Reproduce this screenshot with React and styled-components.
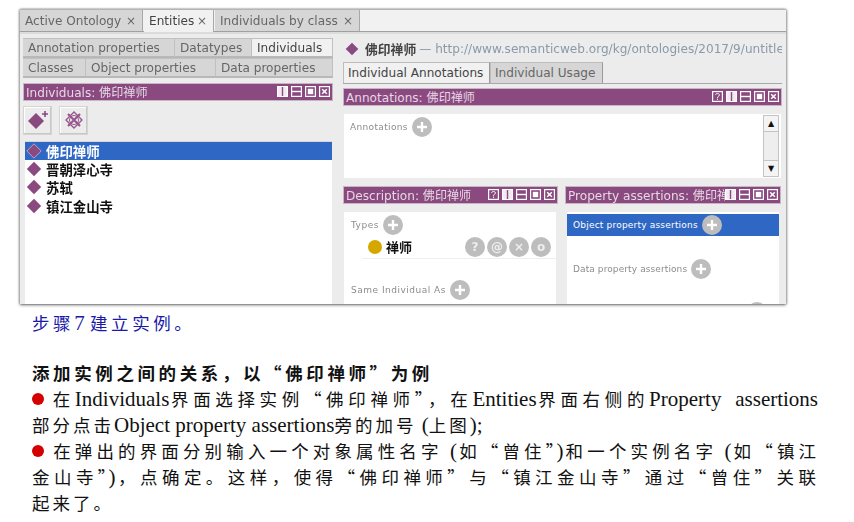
import React from 'react'
import styled, { createGlobalStyle } from 'styled-components'

const purple = '#8a4a80'
const blue = '#2f68c4'

const GlobalStyle = createGlobalStyle`
  html, body { margin: 0; padding: 0; background: #fff; }
  body { width: 854px; height: 522px; overflow: hidden; font-family: "DejaVu Sans", "Noto Sans CJK SC", sans-serif; }
`

const Page = styled.div`
  padding: 9px 0 0 20px;
`

const Window = styled.div`
  width: 766px;
  height: 295px;
  background: #ececec;
  overflow: hidden;
  border-top: 1px solid #b5b5b5;
  box-shadow: 0 1px 3px rgba(0,0,0,.55), 1px 0 2px rgba(0,0,0,.2), -1px 0 2px rgba(0,0,0,.2);
  filter: blur(.35px);
  box-sizing: border-box;
`

const TabBar = styled.div`
  display: flex;
  height: 21px;
  background: #f1f1f1;
  border-bottom: 1px solid #a0a0a0;
  box-shadow: 0 2px 0 #dcdcdc;
`

const MainTab = styled.div`
  width: ${p => p.$w}px;
  margin-right: 1px;
  padding: 0 6px 0 5px;
  box-sizing: border-box;
  display: flex;
  align-items: center;
  justify-content: space-between;
  font-size: 12.1px;
  color: ${p => p.$on ? '#444' : '#666'};
  background: ${p => p.$on ? '#f1f1f1' : '#d6d6d6'};
  height: ${p => p.$on ? 22 : 21}px;
  border-right: 1px solid #a8a8a8;
  white-space: nowrap;
`

const Close = styled.span`
  font-size: 12px;
  color: #666;
`

const Body = styled.div`
  display: grid;
  grid-template-columns: 310px 439px;
  column-gap: 10px;
  padding: 6px 0 0 3px;
`

const Column = styled.div`
  display: flex;
  flex-direction: column;
  min-width: 0;
`

const SubTabs = styled.div`
  display: flex;
  height: 20px;
`

const SubTab = styled.div`
  width: ${p => p.$w}px;
  box-sizing: border-box;
  padding-left: 5px;
  display: flex;
  align-items: center;
  font-size: 12.1px;
  color: ${p => p.$on ? '#444' : '#666'};
  background: ${p => p.$on ? '#f1f1f1' : '#d6d6d6'};
  border: 1px solid #c0c0c0;
  border-left: 0;
  border-bottom: 2px solid #b8b8b8;
  white-space: nowrap;
`

const TitleBar = styled.div`
  height: 17.5px;
  margin-top: ${p => p.$mt || 0}px;
  background: ${purple};
  color: #e6d8e4;
  font-size: 12.1px;
  display: flex;
  align-items: center;
  justify-content: space-between;
  padding: 0 3px;
  white-space: nowrap;
  overflow: hidden;
  outline: 1px solid #c9b4c6;
  outline-offset: -1px;
`

const TitleText = styled.span`
  overflow: hidden;
  flex: 1;
  min-width: 0;
`

const TitleIcons = styled.span`
  display: flex;
  gap: 3px;
  flex-shrink: 0;
`

const Toolbar = styled.div`
  display: flex;
  gap: 7px;
  padding: 5px 0 0 0;
`

const ToolButton = styled.div`
  width: 29px;
  height: 29px;
  box-sizing: border-box;
  border: 1px solid #d4d4d4;
  box-shadow: inset -1px -1px 0 #c8c8c8, inset 1px 1px 0 #fff;
  display: flex;
  align-items: center;
  justify-content: center;
`

const List = styled.div`
  margin: 6px 1px 0 2px;
  height: 170px;
  background: #fff;
  border-top: 1px solid #d6d6d6;
`

const Row = styled.div`
  height: ${p => p.$on ? 18 : 18.5}px;
  display: flex;
  align-items: center;
  gap: 4px;
  padding-left: 1px;
  font-size: 13.4px;
  font-weight: 700;
  font-family: "Noto Sans CJK SC", sans-serif;
  color: ${p => p.$on ? '#fff' : '#111'};
  background: ${p => p.$on ? blue : 'transparent'};
`

const EntityLine = styled.div`
  height: 21px;
  display: flex;
  align-items: center;
  gap: 6px;
  padding-left: 2px;
  font-size: 12.1px;
  color: #8a9aa8;
  white-space: nowrap;
  overflow: hidden;
  svg { flex-shrink: 0; }
`

const EntityName = styled.span`
  color: #444;
  font-weight: 700;
  font-size: 12.8px;
  margin-right: -3px;
  font-family: "Noto Sans CJK SC", sans-serif;
`

const ViewTabs = styled.div`
  display: flex;
  margin-top: 3px;
  height: 21px;
  border-bottom: 1px solid #a8a8a8;
`

const ViewTab = styled.div`
  width: ${p => p.$w}px;
  box-sizing: border-box;
  padding-left: 4px;
  display: flex;
  align-items: center;
  font-size: 12.1px;
  color: ${p => p.$on ? '#444' : '#666'};
  background: ${p => p.$on ? '#f1f1f1' : '#d6d6d6'};
  border: 1px solid #bdbdbd;
  border-bottom: 0;
  border-right: 1px solid #999;
`

const Card = styled.div`
  margin: ${p => p.$m || '8.5px 1px 0'};
  background: #fff;
  height: ${p => p.$h}px;
  display: flex;
  position: relative;
  overflow: hidden;
`

const AnnotBody = styled.div`
  flex: 1;
  display: flex;
  align-items: flex-start;
  padding: 2px 0 0 6px;
`

const FrameLabel = styled.div`
  display: flex;
  align-items: center;
  gap: 4px;
  height: ${p => p.$h || 22}px;
  font-size: 9px;
  letter-spacing: ${p => p.$ls ?? .25}px;
  color: ${p => p.$on ? '#fff' : '#8c8c8c'};
  background: ${p => p.$on ? blue : 'transparent'};
  padding-left: ${p => p.$pl ?? 6}px;
`

const PlusCircle = styled.span`
  width: ${p => p.$s || 20}px;
  height: ${p => p.$s || 20}px;
  border-radius: 50%;
  background: #bdbdbd;
  flex-shrink: 0;
  display: flex;
  align-items: center;
  justify-content: center;
`

const Scroll = styled.div`
  width: 16px;
  margin: 1px 2px 1px 0;
  display: flex;
  flex-direction: column;
  background: #eee;
  border: 1px solid #c4c4c4;
  box-sizing: border-box;
`

const ScrollBtn = styled.div`
  height: 15px;
  background: #f4f4f4;
  display: flex;
  align-items: center;
  justify-content: center;
  font-size: 8px;
  color: #111;
  ${p => p.$end ? 'margin-top: auto; border-top: 1px solid #c4c4c4;' : 'border-bottom: 1px solid #c4c4c4;'}
`

const SplitRow = styled.div`
  display: grid;
  grid-template-columns: 215px 216px;
  column-gap: 7px;
  margin-top: 8px;
`

const FrameBody = styled.div`
  flex: 1;
  display: flex;
  flex-direction: column;
  min-width: 0;
  padding: ${p => p.$p || '0'};
`

const TypeRow = styled.div`
  height: 22px;
  margin: 0 0 0 17px;
  display: flex;
  align-items: center;
  border-bottom: 1px solid #eee;
  font-size: 13px;
  font-weight: 700;
  font-family: "Noto Sans CJK SC", sans-serif;
  color: #111;
`

const GoldDot = styled.span`
  width: 14px;
  height: 14px;
  border-radius: 50%;
  background: #d4a800;
  margin: 0 4px 0 6px;
`

const RowActions = styled.span`
  margin-left: auto;
  margin-right: 5px;
  display: flex;
  gap: 2px;
`

const ActionCircle = styled(PlusCircle)`
  color: #eee;
  font-size: 12px;
  font-weight: 700;
  font-family: "DejaVu Sans", sans-serif;
`

const Gap = styled.div`
  height: ${p => p.$h}px;
  flex-shrink: 0;
`

const PeekPlus = styled(PlusCircle)`
  position: absolute;
  right: 12px;
  bottom: -10px;
`

const Doc = styled.div`
  width: 786px;
  margin: 6px 0 0 12px;
  font-family: "Liberation Serif", "Noto Sans CJK SC", serif;
  font-size: 21px;
  color: #111;
`

const Line = styled.div`
  height: 26px;
  line-height: 26px;
  white-space: nowrap;
  text-align: ${p => p.$left ? 'left' : 'justify'};
  text-align-last: ${p => p.$left ? 'left' : 'justify'};
  color: ${p => p.$color || 'inherit'};
  font-weight: ${p => p.$bold ? 700 : 400};
  margin-top: ${p => p.$mt || 0}px;
`

const Cjk = styled.span`
  font-size: 17.5px;
  font-family: "Noto Sans CJK SC", sans-serif;
  letter-spacing: ${p => p.$ls ?? 3}px;
`

const Bullet = styled.span`
  display: inline-block;
  width: 12px;
  height: 12px;
  border-radius: 50%;
  background: #d40000;
  margin-right: 7px;
  vertical-align: 1px;
`

const Diamond = ({ size = 16, on }) => (
  <svg width={size} height={size} viewBox="0 0 16 16">
    <path d="M8 .8 15.2 8 8 15.2 .8 8Z" fill={purple} stroke={on ? '#b9a3c4' : 'none'} />
  </svg>
)

const AddDiamond = () => (
  <svg width="24" height="22" viewBox="0 0 24 22">
    <path d="M10 4 18 12 10 20 2 12Z" fill={purple} />
    <path d="M19 2v6M16 5h6" stroke={purple} strokeWidth="1.6" />
  </svg>
)

const RemoveDiamond = () => (
  <svg width="20" height="20" viewBox="0 0 20 20" fill="none" stroke="#96588d" strokeWidth="1.4">
    <path d="M10 2 18 10 10 18 2 10Z" />
    <circle cx="10" cy="10" r="4.5" strokeWidth="1" />
    <path d="M4 4 16 16M16 4 4 16" strokeWidth="2.2" />
  </svg>
)

const Plus = ({ s = 12 }) => (
  <svg width={s} height={s} viewBox="0 0 12 12">
    <path d="M6 1v10M1 6h10" stroke="#fff" strokeWidth="2.4" />
  </svg>
)

const WinIcon = ({ kind }) => (
  <svg width="11" height="11" viewBox="0 0 11 11" fill="none" stroke="#fff">
    <rect x=".6" y=".6" width="9.8" height="9.8" strokeWidth="1.2" fill={kind === 'split-v' ? '#f2eaf1' : 'none'} />
    {kind === 'help' && <path d="M3.6 4c0-2 3.8-2 3.8 0 0 1.4-1.9 1.2-1.9 2.8M5.5 7.6v1.2" strokeWidth="1" />}
    {kind === 'split-v' && <path d="M5.5 1v9" stroke={purple} strokeWidth="1.4" />}
    {kind === 'split-h' && <path d="M1 5.5h9" strokeWidth="1.4" />}
    {kind === 'max' && <rect x="2.8" y="2.8" width="5.4" height="5.4" fill="#fff" stroke="none" />}
    {kind === 'close' && <path d="M3.2 3.2 7.8 7.8M7.8 3.2 3.2 7.8" strokeWidth="1.5" />}
  </svg>
)

const Title = ({ children, help, mt }) => (
  <TitleBar $mt={mt}>
    <TitleText>{children}</TitleText>
    <TitleIcons>
      {help && <WinIcon kind="help" />}
      <WinIcon kind="split-v" />
      <WinIcon kind="split-h" />
      <WinIcon kind="max" />
      <WinIcon kind="close" />
    </TitleIcons>
  </TitleBar>
)

const individuals = ['佛印禅师', '晋朝泽心寺', '苏轼', '镇江金山寺']

export default function App() {
  return (
    <Page>
      <GlobalStyle />
      <Window>
        <TabBar>
          <MainTab $w={123}>Active Ontology <Close>×</Close></MainTab>
          <MainTab $w={70} $on>Entities <Close>×</Close></MainTab>
          <MainTab $w={145}>Individuals by class <Close>×</Close></MainTab>
        </TabBar>
        <Body>
          <Column>
            <SubTabs>
              <SubTab $w={152}>Annotation properties</SubTab>
              <SubTab $w={77}>Datatypes</SubTab>
              <SubTab $w={81} $on>Individuals</SubTab>
            </SubTabs>
            <SubTabs>
              <SubTab $w={63}>Classes</SubTab>
              <SubTab $w={130}>Object properties</SubTab>
              <SubTab $w={117}>Data properties</SubTab>
            </SubTabs>
            <Title mt={5}>Individuals: 佛印禅师</Title>
            <Toolbar>
              <ToolButton><AddDiamond /></ToolButton>
              <ToolButton><RemoveDiamond /></ToolButton>
            </Toolbar>
            <List>
              {individuals.map((name, i) => (
                <Row key={name} $on={i === 0}>
                  <Diamond on={i === 0} />
                  {name}
                </Row>
              ))}
            </List>
          </Column>
          <Column>
            <EntityLine>
              <Diamond size={14} />
              <EntityName>佛印禅师</EntityName>
              — http://www.semanticweb.org/kg/ontologies/2017/9/untitle
            </EntityLine>
            <ViewTabs>
              <ViewTab $w={147} $on>Individual Annotations</ViewTab>
              <ViewTab $w={113}>Individual Usage</ViewTab>
            </ViewTabs>
            <Title help mt={4}>Annotations: 佛印禅师</Title>
            <Card $h={64}>
              <AnnotBody>
                <FrameLabel $pl={0} $ls={.35}>Annotations <PlusCircle><Plus /></PlusCircle></FrameLabel>
              </AnnotBody>
              <Scroll>
                <ScrollBtn>▲</ScrollBtn>
                <ScrollBtn $end>▼</ScrollBtn>
              </Scroll>
            </Card>
            <SplitRow>
              <Column>
                <Title help>Description: 佛印禅师</Title>
                <Card $h={100} $m="8px 2px 0 1px">
                  <FrameBody $p="3px 0 0 1px">
                    <FrameLabel $h={21} $ls={.5}>Types <PlusCircle><Plus /></PlusCircle></FrameLabel>
                    <TypeRow>
                      <GoldDot />
                      禅师
                      <RowActions>
                        <ActionCircle>?</ActionCircle>
                        <ActionCircle>@</ActionCircle>
                        <ActionCircle>×</ActionCircle>
                        <ActionCircle>o</ActionCircle>
                      </RowActions>
                    </TypeRow>
                    <Gap $h={20} />
                    <FrameLabel $ls={.5}>Same Individual As <PlusCircle><Plus /></PlusCircle></FrameLabel>
                  </FrameBody>
                </Card>
              </Column>
              <Column>
                <Title>Property assertions: 佛印禅师</Title>
                <Card $h={100} $m="8px 2px 0 2px">
                  <FrameBody $p="2px 0 0">
                    <FrameLabel $on $ls={.2}>Object property assertions <PlusCircle><Plus /></PlusCircle></FrameLabel>
                    <Gap $h={22} />
                    <FrameLabel $ls={.1}>Data property assertions <PlusCircle><Plus /></PlusCircle></FrameLabel>
                  </FrameBody>
                  <PeekPlus />
                </Card>
              </Column>
            </SplitRow>
          </Column>
        </Body>
      </Window>
      <Doc>
        <Line $left $color="#1a1aa8"><Cjk $ls={3.6}>步骤</Cjk>7 <Cjk $ls={3.6}>建立实例。</Cjk></Line>
        <Line $left $bold $mt={24}><Cjk $ls={3.6}>添加实例之间的关系，以“佛印禅师”为例</Cjk></Line>
        <Line><Bullet /><Cjk>在</Cjk>Individuals<Cjk>界面选择实例“佛印禅师”，在</Cjk>Entities<Cjk>界面右侧的</Cjk>Property{'\u00a0\u00a0'}assertions</Line>
        <Line $left><Cjk>部分点击</Cjk>Object property assertions<Cjk>旁的加号</Cjk> (<Cjk>上图</Cjk>);</Line>
        <Line><Bullet /><Cjk $ls={2}>在弹出的界面分别输入一个对象属性名字</Cjk> (<Cjk $ls={2}>如“曾住”</Cjk>)<Cjk $ls={2}>和一个实例名字</Cjk> (<Cjk $ls={2}>如“镇江</Cjk></Line>
        <Line><Cjk $ls={2}>金山寺”</Cjk>)<Cjk $ls={2}>，点确定。这样，使得“佛印禅师”与“镇江金山寺”通过“曾住”关联</Cjk></Line>
        <Line $left><Cjk>起来了。</Cjk></Line>
      </Doc>
    </Page>
  )
}
